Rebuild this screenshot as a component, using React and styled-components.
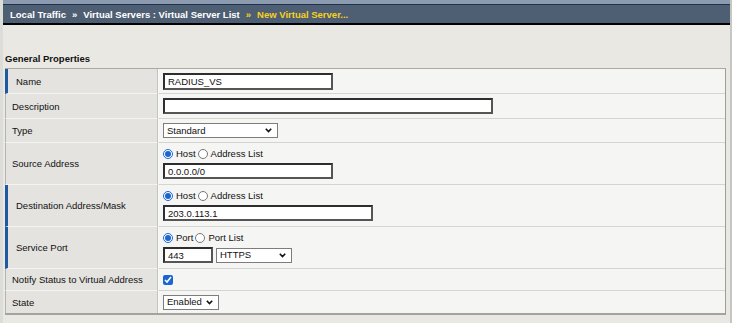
import styled, { createGlobalStyle, css } from 'styled-components';

const GlobalStyle = createGlobalStyle`
  html, body {
    margin: 0;
    padding: 0;
    background: #e9e8e3;
  }
  body {
    font-family: "Liberation Sans", Arial, sans-serif;
    color: #111;
  }
`;

const Frame = styled.div`
  width: 732px;
  height: 323px;
  box-sizing: border-box;
  background: #e9e8e3;
  border-left: 3px solid #dcdcd9;
  border-right: 2px solid #c6c6c3;
  overflow: hidden;
`;

const Breadcrumb = styled.div`
  height: 25px;
  box-sizing: border-box;
  background: #4f5f73;
  border-top: 4px solid #8c9bb0;
  border-bottom: 2px solid #000;
  box-shadow: inset 0 1px 0 #1d3350;
  display: flex;
  align-items: center;
  padding: 1px 0 0 7px;
  font-size: 9.5px;
  font-weight: bold;
  color: #fff;
  white-space: nowrap;
`;

const Crumb = styled.span`
  color: ${p => (p.$current ? '#f7d11e' : '#fff')};
`;

const Sep = styled.span`
  color: ${p => (p.$current ? '#f7d11e' : '#fff')};
  margin: 0 6px;
`;

const Content = styled.div`
  padding: 28px 4px 0 2px;
`;

const SectionTitle = styled.div`
  font-size: 9.5px;
  font-weight: bold;
  line-height: 12px;
  margin-bottom: 3px;
`;

const Table = styled.div`
  display: grid;
  grid-template-columns: 153px 1fr;
  border-top: 1px solid #a9a9a6;
  border-right: 1px solid #9d9d9a;
  border-bottom: 2px solid #a3a3a0;
`;

const Label = styled.div`
  height: ${p => p.$h}px;
  box-sizing: border-box;
  display: flex;
  align-items: center;
  background: #e4e3df;
  font-size: 9.5px;
  border-right: 1px solid #c2c2be;
  border-bottom: ${p => (p.$last ? 'none' : '1px solid #f3f3f1')};
  ${p =>
    p.$required
      ? css`
          border-left: 3px solid #1f5aa0;
          padding-left: 8px;
        `
      : css`
          border-left: 1px solid #b4b4b1;
          padding-left: 6px;
        `}
`;

const Value = styled.div`
  height: ${p => p.$h}px;
  box-sizing: border-box;
  display: flex;
  flex-direction: column;
  justify-content: center;
  gap: 3px;
  padding-left: 4px;
  background: #f5f5f3;
  border-left: 1px solid #fbfbfa;
  border-bottom: ${p => (p.$last ? 'none' : '1px solid #d4d4d1')};
`;

const Line = styled.div`
  display: flex;
  align-items: center;
  gap: ${p => p.$gap || 0}px;
  font-size: 9.5px;
  line-height: 12px;
`;

const TextInput = styled.input`
  width: ${p => p.$w}px;
  height: ${p => p.$hh || 16}px;
  box-sizing: border-box;
  margin: 0;
  padding: 0 0 0 3px;
  border: 2px solid #2e2e2e;
  border-right-color: #555;
  border-bottom-color: #555;
  background: #fff;
  font-family: "Liberation Sans", Arial, sans-serif;
  font-size: 9.5px;
  color: #111;
  outline: none;
`;

const SelectBox = styled.div`
  width: ${p => p.$w}px;
  height: 15px;
  box-sizing: border-box;
  display: flex;
  align-items: center;
  justify-content: space-between;
  padding: 0 5px 0 3px;
  border: 1px solid #7d7d7d;
  background: #fff;
  font-size: 9.5px;
  color: #111;
`;

const Radio = styled.input.attrs({ type: 'radio' })`
  width: 10px;
  height: 10px;
  margin: 0 3px 0 0;
  accent-color: #1a66d0;
`;

const RadioText = styled.span`
  margin-right: 2px;
`;

const Check = styled.input.attrs({ type: 'checkbox' })`
  width: 10px;
  height: 10px;
  margin: 0;
  accent-color: #1a66d0;
`;

const Chevron = () => (
  <svg width="7" height="5" viewBox="0 0 7 5">
    <polyline points="0.8,0.8 3.5,3.6 6.2,0.8" fill="none" stroke="#111" strokeWidth="1.6" />
  </svg>
);

const Select = ({ w, value }) => (
  <SelectBox $w={w}>
    <span>{value}</span>
    <Chevron />
  </SelectBox>
);

const RadioPair = ({ name, first, second }) => (
  <Line>
    <Radio name={name} defaultChecked />
    <RadioText>{first}</RadioText>
    <Radio name={name} />
    <RadioText>{second}</RadioText>
  </Line>
);

const rows = [
  { label: 'Name', h: 25, required: true, field: <TextInput $w={170} $hh={17} defaultValue="RADIUS_VS" /> },
  { label: 'Description', h: 25, field: <TextInput $w={330} defaultValue="" /> },
  { label: 'Type', h: 24, field: <Select w={115} value="Standard" /> },
  {
    label: 'Source Address',
    h: 42,
    field: (
      <>
        <RadioPair name="src" first="Host" second="Address List" />
        <TextInput $w={170} defaultValue="0.0.0.0/0" />
      </>
    ),
  },
  {
    label: 'Destination Address/Mask',
    h: 42,
    required: true,
    field: (
      <>
        <RadioPair name="dst" first="Host" second="Address List" />
        <TextInput $w={210} defaultValue="203.0.113.1" />
      </>
    ),
  },
  {
    label: 'Service Port',
    h: 42,
    required: true,
    field: (
      <>
        <RadioPair name="port" first="Port" second="Port List" />
        <Line $gap={3}>
          <TextInput $w={50} defaultValue="443" />
          <Select w={76} value="HTTPS" />
        </Line>
      </>
    ),
  },
  { label: 'Notify Status to Virtual Address', h: 22, field: <Check defaultChecked /> },
  { label: 'State', h: 22, field: <Select w={56} value="Enabled" /> },
];

export default function App() {
  return (
    <>
      <GlobalStyle />
      <Frame>
        <Breadcrumb>
          <Crumb>Local Traffic</Crumb>
          <Sep>»</Sep>
          <Crumb>Virtual Servers : Virtual Server List</Crumb>
          <Sep $current>»</Sep>
          <Crumb $current>New Virtual Server...</Crumb>
        </Breadcrumb>
        <Content>
          <SectionTitle>General Properties</SectionTitle>
          <Table>
            {rows.map((r, i) => {
              const last = i === rows.length - 1;
              return [
                <Label key={r.label + '-l'} $h={r.h} $required={r.required} $last={last}>
                  {r.label}
                </Label>,
                <Value key={r.label + '-v'} $h={r.h} $last={last}>
                  {r.field.type === Check || r.field.type === Select || r.field.type === TextInput ? (
                    <Line>{r.field}</Line>
                  ) : (
                    r.field
                  )}
                </Value>,
              ];
            })}
          </Table>
        </Content>
      </Frame>
    </>
  );
}
